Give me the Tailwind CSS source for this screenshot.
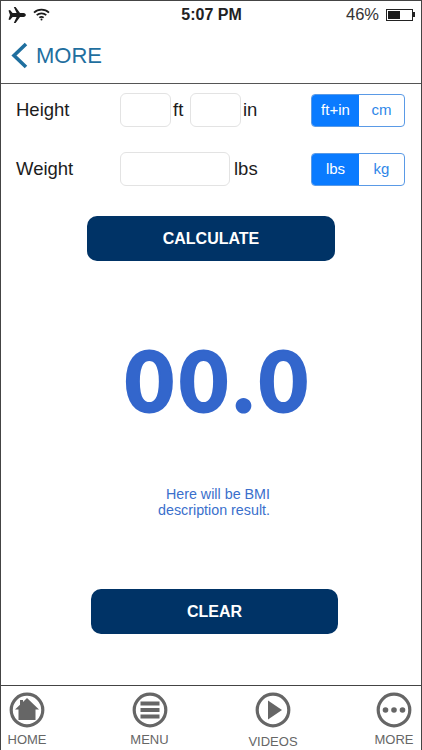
<!DOCTYPE html>
<html lang="en">
<head>
    <meta charset="UTF-8">
    <meta name="viewport" content="width=device-width, initial-scale=1.0">
    <title>BMI Calculator</title>
    <script src="https://cdn.jsdelivr.net/npm/@tailwindcss/browser@4"></script>
</head>
<body class="bg-white">
    <div class="w-[422px] h-[750px] flex flex-col overflow-hidden bg-white border-x border-t border-[#444] font-['Liberation_Sans',sans-serif] text-[#1c1c1c]">
        <!-- Status bar -->
        <div class="h-[27px] shrink-0 flex items-center justify-between pl-[7px] pr-[6px]">
            <div class="flex items-center gap-[7px] w-[120px]">
                <svg class="w-[18px] h-[16px]" viewBox="0 0 18 16" fill="#1c1c1c"><path d="M0.5 3.5 L2 3 L4.6 6 L8.6 6 L5.8 0 L7.6 0 L12 6 L15.5 6 C17 6 17.8 7.2 17.8 8 C17.8 8.8 17 10 15.5 10 L12 10 L7.6 16 L5.8 16 L8.6 10 L4.6 10 L2 13 L0.5 12.5 L2 8 Z"/></svg>
                <svg class="w-[17px] h-[13px]" viewBox="0 0 17 13" fill="none" stroke="#1c1c1c" stroke-width="1.7"><path d="M1 4.6 C5 0.6 12 0.6 16 4.6"/><path d="M3.7 7.2 C6.3 4.8 10.7 4.8 13.3 7.2"/><path d="M6.3 9.6 C7.6 8.6 9.4 8.6 10.7 9.6"/><circle cx="8.5" cy="11.6" r="1" fill="#1c1c1c" stroke="none"/></svg>
            </div>
            <span class="text-[16px] font-bold leading-none text-[#222]">5:07 PM</span>
            <div class="flex items-center justify-end gap-[7px] w-[120px]">
                <span class="text-[16.5px] leading-none text-[#333]">46%</span>
                <div class="flex items-center">
                    <div class="w-[27px] h-[12px] border border-[#222] p-[1px]">
                        <div class="w-[12px] h-full bg-[#1c1c1c]"></div>
                    </div>
                    <div class="w-[2px] h-[5px] bg-[#222]"></div>
                </div>
            </div>
        </div>
        <!-- Nav bar -->
        <div class="h-[56px] shrink-0 flex items-center border-b border-[#555] pl-[10px] gap-[8px] text-[#1f6f9f]">
            <svg class="w-[17px] h-[27px]" viewBox="0 0 17 27" fill="none" stroke="#1f6f9f" stroke-width="3.6"><path d="M15 2 L3 13.5 L15 25"/></svg>
            <span class="text-[22px] leading-none">MORE</span>
        </div>
        <!-- Form -->
        <div class="flex-1 flex flex-col">
            <div class="flex items-center h-[34px] mt-[9px] pl-[15px] pr-[16px] text-[18.5px]">
                <span class="w-[104px]">Height</span>
                <div class="w-[51px] h-[34px] rounded-[6px] border border-[#e3e3e3]"></div>
                <span class="w-[19px] pl-[2px]">ft</span>
                <div class="w-[51px] h-[34px] rounded-[6px] border border-[#e3e3e3]"></div>
                <span class="pl-[2px]">in</span>
                <div class="ml-auto w-[94px] h-[33px] flex rounded-[4px] border border-[#5a9ae6] overflow-hidden text-[15px]">
                    <div class="w-[47px] bg-[#0a7bff] text-white flex items-center justify-center">ft+in</div>
                    <div class="flex-1 text-[#2f86e8] flex items-center justify-center">cm</div>
                </div>
            </div>
            <div class="flex items-center h-[34px] mt-[25px] pl-[15px] pr-[16px] text-[18.5px]">
                <span class="w-[104px]">Weight</span>
                <div class="w-[110px] h-[34px] rounded-[6px] border border-[#e3e3e3]"></div>
                <span class="pl-[4px]">lbs</span>
                <div class="ml-auto w-[94px] h-[33px] flex rounded-[4px] border border-[#5a9ae6] overflow-hidden text-[15px]">
                    <div class="w-[47px] bg-[#0a7bff] text-white flex items-center justify-center">lbs</div>
                    <div class="flex-1 text-[#2f86e8] flex items-center justify-center">kg</div>
                </div>
            </div>
            <button class="self-start ml-[86px] mt-[30px] w-[248px] h-[45px] rounded-[10px] bg-[#003366] text-white text-[16px] font-bold">CALCULATE</button>
            <div class="self-start ml-[124px] mt-[67px] text-[84px] leading-[104px] tracking-[5.5px] font-black font-['Lato',sans-serif] text-[#3366cc] [-webkit-text-stroke:2px_#3366cc]">00.0</div>
            <div class="self-start ml-[157px] mt-[54px] w-[112px] text-right text-[14.3px] leading-[16px] text-[#3a6fcc] whitespace-nowrap">Here will be BMI<br>description result.</div>
            <button class="self-start ml-[90px] mt-[71px] w-[247px] h-[45px] rounded-[10px] bg-[#003366] text-white text-[16px] font-bold">CLEAR</button>
        </div>
        <!-- Tab bar -->
        <div class="h-[65px] shrink-0 border-t border-[#444] flex pl-[4px] text-[13px] text-[#666]">
            <div class="flex flex-col items-center w-[44px] pt-[6px]">
                <svg class="w-[36px] h-[36px]" viewBox="0 0 36 36"><circle cx="18" cy="18" r="15.8" fill="none" stroke="#666" stroke-width="3.2"/><path d="M18 6 L30 17.5 L26.5 17.5 L26.5 28 L9.5 28 L9.5 17.5 L6 17.5 L11 12.7 L11 8 L14 8 L14 10 Z" fill="#666"/></svg>
                <span class="leading-none mt-[5px]">HOME</span>
            </div>
            <div class="flex flex-col items-center w-[44px] ml-[78.5px] pt-[6px]">
                <svg class="w-[36px] h-[36px]" viewBox="0 0 36 36"><circle cx="18" cy="18" r="15.8" fill="none" stroke="#666" stroke-width="3.2"/><rect x="8.5" y="9.5" width="19" height="4" fill="#666"/><rect x="8.5" y="16" width="19" height="4" fill="#666"/><rect x="8.5" y="22.5" width="19" height="4" fill="#666"/></svg>
                <span class="leading-none mt-[5px]">MENU</span>
            </div>
            <div class="flex flex-col items-center w-[50px] ml-[76.5px] pt-[6px]">
                <svg class="w-[36px] h-[36px]" viewBox="0 0 36 36"><circle cx="18" cy="18" r="15.8" fill="none" stroke="#666" stroke-width="3.2"/><path d="M13 8.5 L27 18 L13 27.5 Z" fill="#666"/></svg>
                <span class="leading-none mt-[7px]">VIDEOS</span>
            </div>
            <div class="flex flex-col items-center w-[44px] ml-[74px] pt-[6px]">
                <svg class="w-[36px] h-[36px]" viewBox="0 0 36 36"><circle cx="18" cy="18" r="15.8" fill="none" stroke="#666" stroke-width="3.2"/><circle cx="9.5" cy="18" r="2.8" fill="#666"/><circle cx="18" cy="18" r="2.8" fill="#666"/><circle cx="26.5" cy="18" r="2.8" fill="#666"/></svg>
                <span class="leading-none mt-[5px]">MORE</span>
            </div>
        </div>
    </div>
</body>
</html>
